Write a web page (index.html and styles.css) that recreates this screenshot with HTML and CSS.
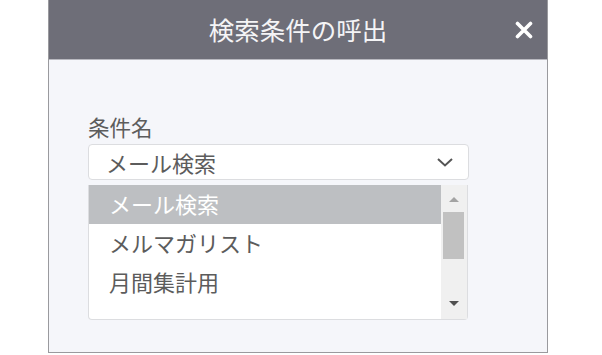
FILE: index.html
```html
<!DOCTYPE html>
<html lang="ja">
<head>
  <meta charset="UTF-8">
  <title>検索条件の呼出</title>
  <link rel="stylesheet" href="styles.css">
</head>
<body>
  <div class="dialogo">
    <div class="cabecera">
      <h1>検索条件の呼出</h1>
      <span class="cerrar">
        <svg width="18" height="18" viewBox="0 0 18 18">
          <path d="M2.5 2.5 L15.5 15.5 M15.5 2.5 L2.5 15.5" stroke="#fff" stroke-width="3.6" stroke-linecap="round"/>
        </svg>
      </span>
    </div>

    <div class="cuerpo">
      <div class="etiqueta">条件名</div>
      <div class="selector">
        <span>メール検索</span>
        <svg width="18" height="12" viewBox="0 0 18 12">
          <path d="M2 3 L9 9.5 L16 3" fill="none" stroke="#555" stroke-width="2"/>
        </svg>
      </div>

      <div class="lista">
        <div class="opciones">
          <div class="opcion activa">メール検索</div>
          <div class="opcion">メルマガリスト</div>
          <div class="opcion">月間集計用</div>
        </div>
        <div class="barra">
          <span class="flecha arriba"></span>
          <span class="pulgar"></span>
          <span class="flecha abajo"></span>
        </div>
      </div>
    </div>
  </div>
</body>
</html>
```

FILE: styles.css
```css
body {
  margin: 0;
  background: #fff;
  font-family: "Noto Sans CJK JP", "Noto Sans", sans-serif;
  color: #5c5c5c;
}
.dialogo {
  width: 500px;
  height: 353px;
  margin-left: 48px;
  box-sizing: border-box;
  border: 1px solid #9a9a9e;
  border-top: none;
  background: #f5f6fa;
}
.cabecera {
  position: relative;
  height: 59px;
  background: #6e6e78;
  border-bottom: 1px solid #b9b9c0;
  display: flex;
  align-items: center;
  justify-content: center;
}
h1 {
  margin: 0;
  font-size: 25.5px;
  font-weight: normal;
  color: #f4f4f6;
  line-height: 1;
  padding-bottom: 2px;
}
.cerrar {
  position: absolute;
  right: 14px;
  top: 21px;
  display: flex;
}
.cuerpo {
  padding: 52px 0 0 39px;
}
.etiqueta {
  font-size: 21.5px;
  line-height: 30px;
  margin-bottom: 2px;
}
.selector {
  width: 381px;
  height: 36px;
  box-sizing: border-box;
  border: 1px solid #dcdde0;
  border-radius: 4px;
  background: #fff;
  display: flex;
  align-items: center;
  justify-content: space-between;
  padding: 0 14px 0 17px;
  font-size: 22px;
}
.lista {
  margin-top: 5px;
  width: 380px;
  height: 135px;
  box-sizing: border-box;
  border: 1px solid #dcdde0;
  border-top: none;
  border-radius: 0 0 4px 4px;
  background: #fff;
  display: flex;
}
.opciones {
  flex: 1;
}
.opcion {
  height: 39px;
  line-height: 37px;
  padding-left: 20px;
  font-size: 22px;
}
.activa {
  background: #bdbfc2;
  color: #fff;
}
.barra {
  width: 26px;
  background: #f0f0f0;
  position: relative;
}
.pulgar {
  position: absolute;
  left: 2px;
  right: 3px;
  top: 27px;
  height: 47px;
  background: #c1c1c1;
}
.flecha {
  position: absolute;
  left: 8px;
  width: 0;
  height: 0;
  border-left: 5px solid transparent;
  border-right: 5px solid transparent;
}
.arriba {
  top: 12px;
  border-bottom: 5px solid #a3a3a3;
}
.abajo {
  top: 116px;
  border-top: 5px solid #505050;
}
```
